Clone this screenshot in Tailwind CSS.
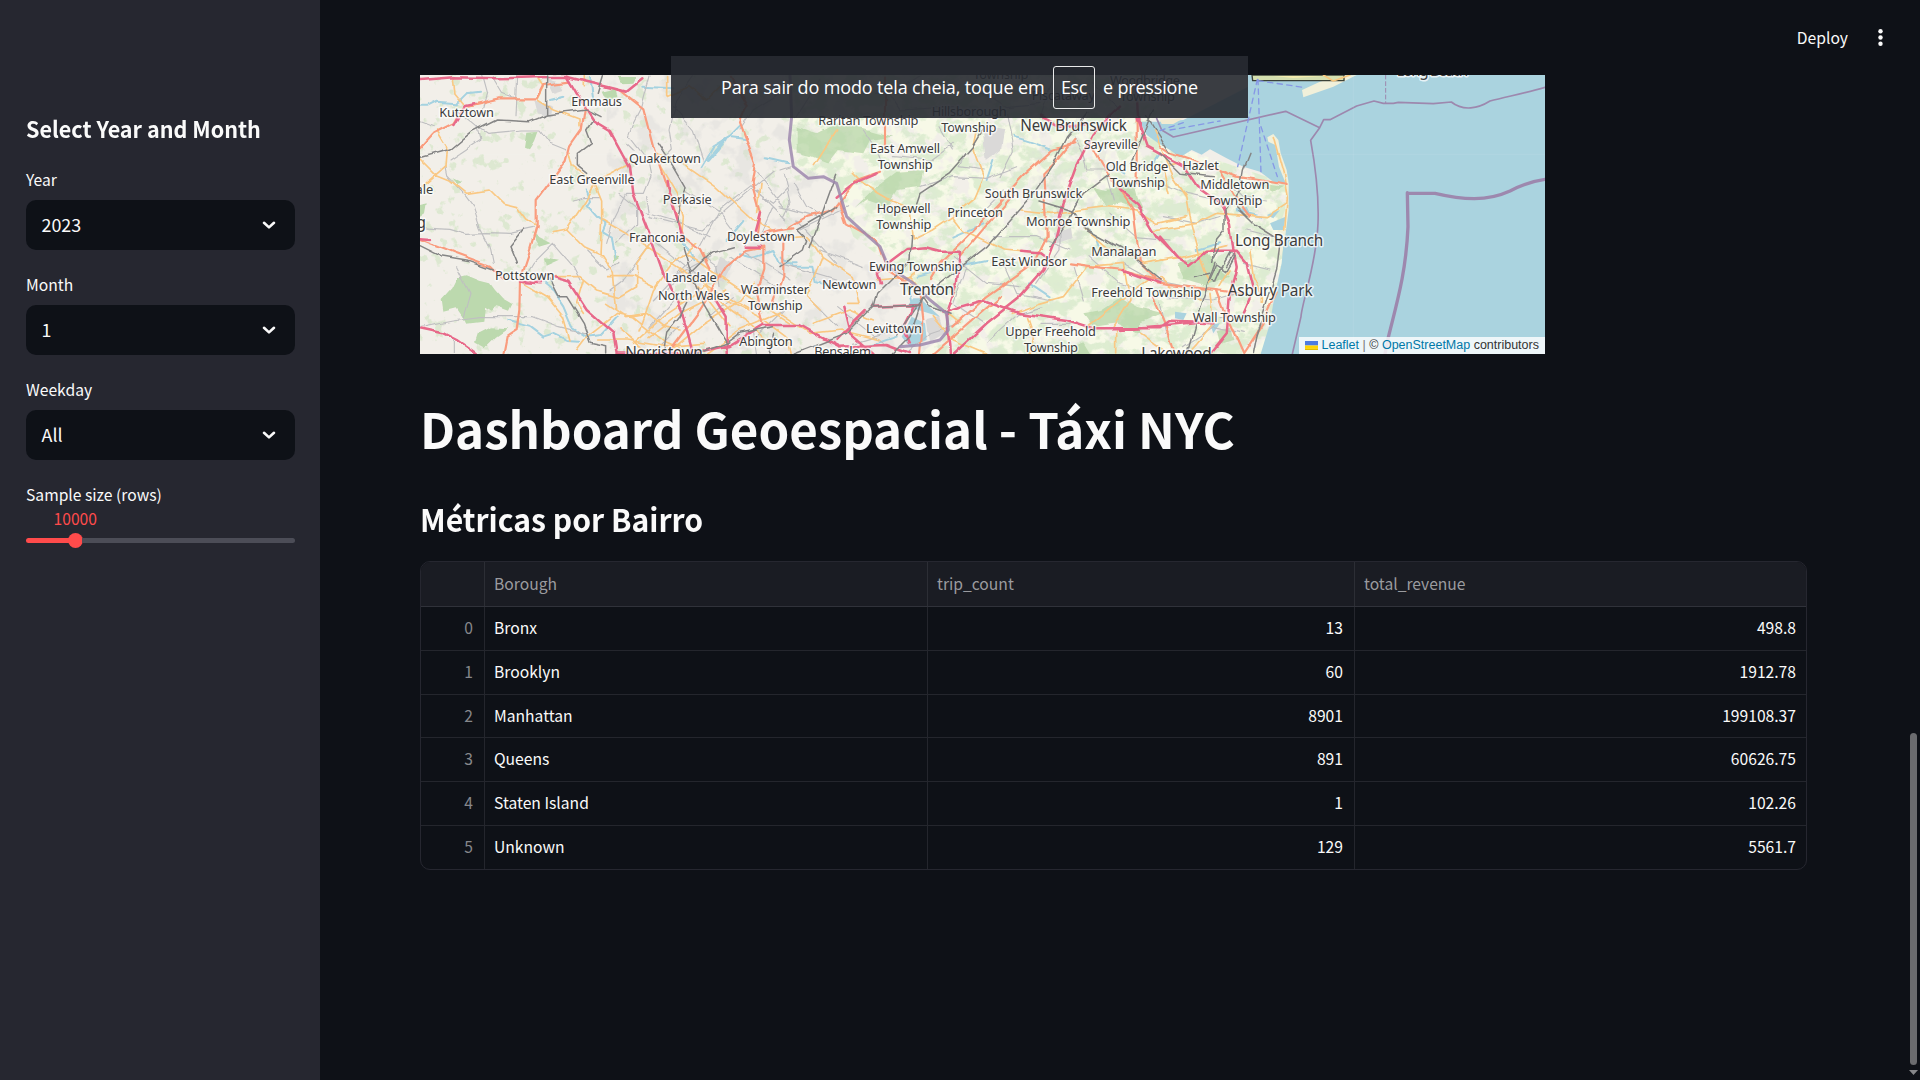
<!DOCTYPE html>
<html lang="pt">
<head>
<meta charset="utf-8">
<title>Dashboard Geoespacial - Táxi NYC</title>
<script src="https://cdn.jsdelivr.net/npm/@tailwindcss/browser@4"></script>
</head>
<body class="relative flex h-screen w-screen overflow-hidden bg-[#0e1117] font-['Noto_Sans_CJK_SC',sans-serif] text-[#fafafa]">

<aside class="flex w-[320px] shrink-0 flex-col bg-[#262730] px-[26px] pt-[110px]">
  <h2 class="h-[36px] text-[22.4px] leading-[36px] font-bold whitespace-nowrap"><span class="inline-block origin-left scale-x-[0.963]">Select Year and Month</span></h2>
  <div class="mt-[19px] flex flex-col gap-[15px]">
    <div>
      <div class="h-[35px] pt-[2px] text-[15.67px] leading-[26px]">Year</div>
      <div class="flex h-[50px] w-[269px] items-center justify-between rounded-[10px] bg-[#0e1117] pr-[19px] pl-[15.500px] text-[17.9px]"><span class="pb-[2px]">2023</span>
        <svg class="h-[14px] w-[14px]" viewBox="0 0 14 14" fill="none" stroke="#fafafa" stroke-width="2.6" stroke-linecap="round" stroke-linejoin="round"><path d="M2 4.8 7 9.4 12 4.8"/></svg></div>
    </div>
    <div class="mt-[5px]">
      <div class="h-[35px] pt-[2px] text-[15.67px] leading-[26px]">Month</div>
      <div class="flex h-[50px] w-[269px] items-center justify-between rounded-[10px] bg-[#0e1117] pr-[19px] pl-[15.500px] text-[17.9px]"><span class="pb-[2px]">1</span>
        <svg class="h-[14px] w-[14px]" viewBox="0 0 14 14" fill="none" stroke="#fafafa" stroke-width="2.6" stroke-linecap="round" stroke-linejoin="round"><path d="M2 4.8 7 9.4 12 4.8"/></svg></div>
    </div>
    <div class="mt-[5px]">
      <div class="h-[35px] pt-[2px] text-[15.67px] leading-[26px]">Weekday</div>
      <div class="flex h-[50px] w-[269px] items-center justify-between rounded-[10px] bg-[#0e1117] pr-[19px] pl-[15.500px] text-[17.9px]"><span class="pb-[2px]">All</span>
        <svg class="h-[14px] w-[14px]" viewBox="0 0 14 14" fill="none" stroke="#fafafa" stroke-width="2.6" stroke-linecap="round" stroke-linejoin="round"><path d="M2 4.8 7 9.4 12 4.8"/></svg></div>
    </div>
    <div class="mt-[5px]">
      <div class="h-[26px] pt-[2px] text-[15.67px] leading-[26px]">Sample size (rows)</div>
      <div class="h-[24px] pt-px pl-[27.5px] text-[15.67px] leading-[24px] text-[#ff4b4b]">10000</div>
      <div class="mt-[3px] flex h-[15px] w-[269px] items-center">
        <div class="h-[5px] w-[43px] rounded-l-full bg-[#ff4b4b]"></div>
        <div class="-mx-px h-[15px] w-[15px] rounded-full bg-[#ff4b4b]"></div>
        <div class="h-[5px] flex-1 rounded-r-full bg-[#4c4d57]"></div>
      </div>
    </div>
  </div>
</aside>

<main class="flex flex-1 flex-col">
  <header class="flex h-[75px] shrink-0 items-start justify-end pt-[24px] pr-[37px]">
    <span class="text-[15.67px] leading-[28px]">Deploy</span>
    <svg class="ml-[30px] mt-[3px] h-[22px] w-[5px]" viewBox="0 0 5 22" fill="#fafafa"><circle cx="2.5" cy="4.2" r="2.2"/><circle cx="2.5" cy="10.5" r="2.2"/><circle cx="2.5" cy="16.8" r="2.2"/></svg>
  </header>

  <section class="flex flex-col pr-[113px] pl-[100px]">
    <div class="relative h-[279px] w-[1125px] overflow-hidden bg-[#f2efe9]">
      <svg class="block h-[279px] w-[1125px]" viewBox="0 75 3375 837" fill="none" stroke-linecap="round" stroke-linejoin="round">
        <defs>
          <filter id="wobble" filterUnits="userSpaceOnUse" x="0" y="60" width="3375" height="870"><feTurbulence type="fractalNoise" baseFrequency=".014" numOctaves="2" seed="4"/><feDisplacementMap in="SourceGraphic" scale="20" xChannelSelector="R" yChannelSelector="G"/></filter>
          <filter id="woods" filterUnits="userSpaceOnUse" x="0" y="60" width="3375" height="870"><feTurbulence type="fractalNoise" baseFrequency=".018 .024" numOctaves="5" seed="9"/><feColorMatrix values="0 0 0 0 .7  0 0 0 0 .83  0 0 0 0 .62  8 0 0 0 -3.7"/><feComposite operator="in" in2="SourceGraphic"/></filter>
          <filter id="farms" filterUnits="userSpaceOnUse" x="0" y="60" width="3375" height="870"><feTurbulence type="fractalNoise" baseFrequency=".02" numOctaves="4" seed="22"/><feColorMatrix values="0 0 0 0 .93  0 0 0 0 .945  0 0 0 0 .8  9 0 0 0 -3.6"/><feComposite operator="in" in2="SourceGraphic"/></filter>
          <filter id="towns" filterUnits="userSpaceOnUse" x="0" y="60" width="3375" height="870"><feTurbulence type="fractalNoise" baseFrequency=".014" numOctaves="4" seed="31"/><feColorMatrix values="0 0 0 0 .7  0 0 0 0 .7  0 0 0 0 .69  9 0 0 0 -4.8"/><feComposite operator="in" in2="SourceGraphic"/></filter>
          <filter id="parks" filterUnits="userSpaceOnUse" x="0" y="60" width="3375" height="870"><feTurbulence type="fractalNoise" baseFrequency=".025" numOctaves="4" seed="51"/><feColorMatrix values="0 0 0 0 .63  0 0 0 0 .78  0 0 0 0 .54  11 0 0 0 -6.9"/><feComposite operator="in" in2="SourceGraphic"/></filter>
        </defs>
        <!-- land cover -->
        <rect y="75" width="1200" height="837" fill="#000" filter="url(#parks)" opacity=".6"/>
        <path d="M1110 75 1115 330 1150 385 1240 385 1270 480 1300 560 1380 620 1440 690 1500 740 1580 800 1570 860 1500 912H2540L2600 560 2600 400 2300 300 2210 200 2210 75Z" fill="#000" filter="url(#farms)"/>
        <path d="M1110 75 1115 330 1150 385 1240 385 1270 480 1300 560 1380 620 1440 690 1500 740 1580 800 1570 860 1500 912H2540L2600 560 2600 400 2300 300 2210 200 2210 75Z" fill="#000" filter="url(#woods)" opacity=".85"/>
        <path d="M560 75H1110L1115 330 1240 400 1320 600 1500 740 1560 860 1500 912H560ZM1700 220H2080L2000 560 1880 600Z" fill="#000" filter="url(#towns)" opacity=".4"/>
        <g fill="#bcd9ae" filter="url(#wobble)">
          <path d="M115 682 140 676 180 692 210 700 225 720 250 748 280 765 270 785 230 770 215 782 195 770 190 812 140 818 110 775 70 785 65 750 100 712Z"/>
          <path d="M175 850 210 832 262 835 225 860 190 895 165 880Z"/><path d="M325 245 355 243 345 270 330 295 318 290Z"/><path d="M545 125 590 115 595 140 560 158Z"/><path d="M590 78 650 78 640 98 605 100Z"/><path d="M0 465 20 460 15 490 0 500ZM98 385 130 400 115 405ZM335 550 395 580 360 590ZM375 625 420 632 380 650ZM578 620 600 625 580 640Z"/>
        </g>
        <g fill="#b5d5a6" opacity=".7" filter="url(#wobble)">
          <path d="M1130 230 1190 250 1250 220 1330 235 1420 260 1350 270 1330 310 1250 300 1220 340 1170 320 1130 310ZM1370 410 1430 365 1510 360 1500 410 1430 420 1400 470 1340 450 1300 480ZM2020 410 2060 420 2140 400 2150 440 2170 480 2100 460 2060 470ZM1990 790 2040 780 2100 740 2150 770 2230 790 2160 820 2160 850 2090 820 2020 830ZM2270 640 2360 610 2390 650 2430 680 2360 710 2290 690ZM2520 400 2590 410 2560 425ZM2390 840 2430 830 2440 870 2400 880ZM1950 895 1990 880 2010 912H1950Z"/>
        </g>
        <path d="M1690 230 1750 240 1740 300 1700 330ZM1520 810 1560 800 1575 850 1530 875ZM1895 550 1950 530 1955 565 1910 580ZM340 150 400 170 390 200 350 190ZM380 85 420 95 430 120 400 130ZM900 620 940 640 910 700 880 680Z" fill="#dad9d8" filter="url(#wobble)"/>
        <!-- water -->
        <path d="M2484 75H3375V912H2522L2550 820 2563 740 2585 640 2592 560 2600 480 2598 402 2560 395 2520 365 2470 350 2420 325 2370 298 2345 314 2315 300 2280 322 2250 300 2215 280 2180 255 2160 215 2220 215 2290 210 2484 110Z" fill="#aad3df"/>
        <path d="M2542 262 2560 252 2575 270 2582 310 2600 360 2606 400 2606 480 2597 550 2584 620 2560 580 2595 480 2597 400 2577 350 2566 285 2545 275ZM2646 120 2700 95 2760 78 2810 75 2740 110 2650 142Z" fill="#f1f0da"/>
        <path d="M2496 75H2772V92H2498Z" fill="#d5e0b0" stroke="#3c4238" stroke-width="4"/><path d="M2560 78h150l-90 6z" fill="#f5edb0"/><path d="m2710 75 30 18 50-18" stroke="#f8c77e" stroke-width="5"/>
        <path d="M2220 210 2290 205 2260 222 2225 222Z" fill="#f2ead0"/>
        <path d="M1460 770 1495 780 1560 800 1500 745 1480 745ZM1475 800 1515 820 1520 870 1470 890 1445 860ZM2550 520 2597 500 2590 540 2560 540ZM2540 495 2580 480 2560 505ZM2265 785 2300 790 2290 810 2265 805ZM2370 822 2400 820 2380 850ZM2455 480 2480 470 2490 490Z" fill="#aad3df"/>
        <g stroke="#a5d2e0" stroke-width="6" filter="url(#wobble)">
          <path d="M0 170H20L50 155 110 160 140 130 180 125M500 420 510 450 500 465 530 500 560 520 550 545 575 560 585 625M265 812 330 830 370 860 400 850 440 870 480 872M370 700 400 725 430 770 455 830 500 860 540 855 590 800M845 350 880 290 930 260 960 230M935 265 975 270M1040 325 1105 340M780 570 810 600 820 630M920 570 970 510M960 610 1000 620 1060 600 1080 640 1130 640M390 150 430 140M510 80 520 150M670 110 760 115M1085 620 1120 650 1180 650 1190 700 1240 710M1700 390 1720 330M1780 260 1830 275 1900 300M1600 560 1690 520M1460 700 1480 780M1490 680 1600 650 1700 630M1830 700 1890 740M1340 890 1430 860M1990 530 2030 560 2040 590M2220 310 2200 340M2080 350 2110 370M2450 480 2520 500M2400 580 2330 600" />
          <path d="M865 330 915 270" stroke-width="11"/>
        </g>
        <!-- minor roads -->
        <g stroke="#bfbfc1" stroke-width="3.4" filter="url(#wobble)">
          <path d="M0 215 40 230M290 75 285 200M185 75 200 130 180 200M110 180 170 230 180 270 90 330M170 230 200 250 310 240 360 240 390 280 440 300M220 80 250 130 290 145M130 430 160 470 180 530 210 590 220 640M0 530 90 535 140 550 200 548 270 550 340 535M75 350 80 375 130 430M400 580 340 640 310 690M400 580 460 650 480 690M0 830 100 810 180 800 340 800 420 830 500 850M100 912 100 870M110 650 150 730 130 800M460 450 490 440 540 440M690 75 665 170 640 220 625 260 680 330 690 380 670 430 620 430 580 510 560 580M820 80 770 150 750 240 760 300 720 340M760 170 820 240 850 330M1110 110 1000 180 960 240M790 420 900 490 960 570M680 440 690 500 850 540 930 470 1060 360M600 430 660 480 760 510 870 560M640 300 620 280M840 590 900 480 990 410 1060 460 1100 420M1010 420 1100 510M1020 560 1060 470M1090 370 1110 460 1090 500M1005 360 1090 470M500 600 560 660 600 640M700 570 610 690 570 720M700 570 800 650 870 700M650 470 650 520 590 580M850 620 890 650 900 710M930 620 1080 720M970 600 1110 690M740 720 780 670 870 620M700 750 820 620M690 830 790 720M780 830 700 912M870 800 940 740M1000 840 1010 912M1090 780 1000 870"/>
          <path d="M1120 400 1160 470 1210 500M1110 350 1080 360M1080 470 1190 500M1140 540 1280 470M1130 510 1250 640M1200 600 1330 650M1080 640 1250 690M1170 750 1250 830M1300 880 1470 830M1330 240 1370 300 1390 350M1370 130 1470 100 1500 80M1420 320 1530 330 1600 280M1500 410 1600 380 1700 385 1790 350M1560 230 1600 300M1700 470 1750 420M1640 310 1620 350 1690 360M1760 190 1780 300 1740 380M1960 260 1990 320 2000 360 2060 360M1720 560 1850 560 1950 600M1920 480 1920 600 1850 700M1750 640 1790 730 1900 750M1600 620 1700 700 1800 710M1640 650 1600 760 1690 820M1700 880 1800 790 1870 770M1860 820 1950 820M1960 650 1990 750M2010 620 2100 700 2160 720M2070 490 2150 560 2250 570M2230 400 2300 430 2390 450M2230 500 2330 520 2400 500M2110 640 2200 690 2300 710M2250 740 2380 750 2450 730M2290 890 2380 830 2470 850M2470 640 2550 660M2430 400 2470 440 2540 450M2480 540 2560 560M2400 800 2520 800M2220 750 2240 850M2080 450 2060 380M1460 912 1530 850 1620 820M1250 770 1390 880"/>
          <path d="M1680 120 1760 170 1860 160M1380 90 1440 180 1600 170M1200 90 1130 200M1900 80 1860 200M2020 100 2100 180"/>
        </g>
        <!-- primary roads -->
        <g stroke="#fac883" stroke-width="5" filter="url(#wobble)">
          <path d="M100 85 105 130 130 160M0 330 40 370 90 390 140 430 210 420 250 460 290 470 320 510 350 530M0 415 75 350 80 290 50 240M350 80 370 110 350 150 400 180 480 210 480 230M400 548 440 540 500 450 525 400 545 450 545 510 540 615M440 540 490 590 545 615M450 310 460 350 520 395 630 340M550 510 620 550 700 600 850 700 990 780M545 615 580 670 590 780M400 680 480 680 530 720 600 740 650 710 650 640 700 570M490 690 470 760 490 790M560 680 640 680 700 710M560 760 620 800 680 790 730 830 780 840M310 700 380 740 430 800 450 870M590 790 500 860 470 900M590 790 640 800 740 880 820 912M740 80 740 140 810 110 860 150 900 110M490 75 490 110M700 310 790 340 890 410 1000 510 1080 560M700 310 770 430 790 500 785 560M640 880 730 800 820 740 890 670M690 860 780 790 920 720M740 912 850 820 960 750 1000 700M800 610 870 660 960 720 1110 820M830 580 760 640 700 720 660 840M850 700 930 780 1000 830 1060 890M780 660 860 740 930 830M1020 400 1010 490M1040 570 1150 560M900 740 1020 800 1100 860 1110 912M600 840 690 912M860 912 960 840 1080 790M530 870 620 870 740 890 850 880"/>
          <path d="M1300 370 1330 400 1400 440 1470 470 1480 570M1160 560 1190 590 1210 620 1190 670 1160 740 1200 780M1210 620 1300 680 1320 760 1280 760M1370 690 1470 680 1510 730M1480 570 1540 540 1600 500 1660 450 1690 380 1660 300 1670 250M1600 500 1630 540 1750 600 1850 610M1800 480 1900 490 1980 480 2060 470 2150 480 2210 520 2300 500M1990 530 2060 590 2170 640 2280 620M2000 650 2110 640 2130 750 2080 830M1780 790 1860 760 1930 740 2000 650M1820 800 1840 860 1830 912M2000 830 2100 750 2200 680M2200 540 2330 520 2390 490 2540 500 2600 460M2250 430 2230 350 2270 340M2200 240 2260 380 2300 440 2310 500 2340 620 2370 700M2220 630 2300 620 2420 590M2490 600 2500 680 2530 740 2530 760M2370 730 2380 820 2330 880 2300 912M2220 680 2260 720 2340 750M2430 660 2400 710M2560 260 2590 370 2602 450 2594 540M1540 800 1600 870 1700 912M1180 820 1290 780 1360 810M1080 790 1170 850 1260 840 1380 870M1570 780 1620 820M1440 700 1490 660M2090 840 2090 912M2160 850 2230 900M1250 240 1180 350"/>
        </g>
        <!-- trunk roads -->
        <g stroke="#fa9c7e" stroke-width="6.5" filter="url(#wobble)">
          <path d="M0 295 40 250 100 220 130 170 240 145 350 145 370 105 450 95M495 175 485 240 450 290 440 330 350 450 350 530 330 600 300 690 298 780 290 840 260 860 250 912M600 120 670 175 700 290 730 380 760 470 790 560 840 600 870 660M930 80 980 170 960 220 1005 340 995 400 1020 490 1010 560 1050 545 1120 535M0 570 100 610 210 650 250 690M750 900 840 780 920 650 980 600 1030 590 1030 660 1010 720 1030 820M1090 580 1090 680 1060 760M1110 530 1160 500 1240 480 1310 390 1380 365M1260 460 1280 520 1370 570 1400 660 1500 720M1600 830 1700 740 1840 640 1880 560 1870 370 1920 320 1960 270M1530 690 1560 640 1680 520 1810 380 1900 300 1960 280M1620 620 1780 430M1950 640 2020 650 2110 660 2220 690M2010 280 2050 350 2100 420 2140 480 2150 560 2160 640 2200 680M2150 210 2150 400M2220 290 2250 310 2400 360 2450 380 2520 390 2600 405M2400 360 2440 430 2490 500M2210 700 2290 710 2390 720 2460 730M2200 740 2240 830 2265 912M2390 720 2420 800 2470 912M1395 80 1395 300M2470 912 2530 820 2570 730M1500 720 1510 810 1500 912M1740 740 1540 912"/>
        </g>
        <!-- motorways -->
        <g stroke="#e8698a" stroke-width="7.5" filter="url(#wobble)">
          <path d="M0 90 100 82 230 85 350 82 440 80 540 105 620 125 670 85M440 80 470 130 520 210 570 240 630 350 640 430 680 530 730 670 790 800 820 912M100 225 135 165 160 160M740 390 745 430 770 510 790 570M0 568 30 570M300 695 360 700M400 682 445 695 500 780 580 850 590 912M0 835 70 850 110 870 170 912M890 750 920 800 920 912M590 910 800 912 930 885 1030 825 1140 825 1200 860 1260 890 1400 885 1470 912M1020 490 1005 545M980 590 1020 590"/>
          <path d="M1250 440 1300 400 1370 370M1380 700 1370 670 1420 630 1460 600 1520 595 1560 605 1620 605 1610 700 1580 790 1590 912M1360 770 1500 765M1570 785 1690 750 1800 790 1940 810 2020 835 2220 835 2250 815 2380 820M1600 912 1700 820 1800 740 1870 660 1900 580 1930 460 1970 350 2020 250 2100 170M1800 605 1860 610 1900 640M2150 205 2180 290 2290 350 2330 410 2400 460 2430 520 2440 600 2450 650 2430 730 2420 850 2370 912M2220 560 2270 620 2310 645 2360 605 2450 605 2480 640 2500 720 2470 790M2100 420 2150 460 2210 560 2270 620M2110 660 2220 700M1340 780 1250 870M1480 770 1450 830 1470 880M2220 830 2100 840M1270 770 1290 850 1360 912M2220 830 2320 820"/>
          <path d="M1860 200 1920 230 2000 220M2150 90 2160 240" />
        </g>
        <!-- railways -->
        <g stroke="#858585" stroke-width="4.5" filter="url(#wobble)">
          <path d="M0 325 90 300 150 250 230 210 330 215 380 195 500 180 540 200M380 75V195M550 80 535 130M520 210 500 240 515 280 475 310 475 350 500 370M715 280 760 350 795 410 770 520M790 590 820 690 850 760 920 880M0 590 60 620 150 635 220 660M385 690 410 740 440 740 490 820 510 880 560 890 560 912M310 540 270 590 290 640M810 670 870 610 940 590M800 760 780 800 740 850 730 912M920 880 820 912M920 880 960 850 1060 830"/>
          <path d="M2000 190 1940 260 1900 340 1840 430 1700 590 1560 700 1510 740 1430 855M1510 740 1500 765 1360 770 1280 850 1120 912M1510 740 1530 770 1590 790M1500 765 1470 860 1420 912M1690 240 1660 290 1590 370 1500 430 1490 460M1475 560 1470 630 1370 730 1360 770M2070 370 1990 430 1960 480 1890 590M1860 450 1960 480 2000 540 2110 600 2220 690M2180 200 2250 310M2220 310 2280 370 2380 380M2200 180 2160 280 2130 340M2490 310 2470 360 2460 420 2415 480 2415 540 2390 570 2375 640M2450 470 2500 520 2580 570 2570 660 2540 760 2510 860 2500 912M2385 640 2340 770 2300 912M1250 370 1170 590M1080 650 1150 600 1160 570 1130 540 1250 470M1050 912 1060 850"/>
          <path d="m2370 690 20-45 15 10-20 45zM2405 655l25-45 15 10-25 45zM2380 630l15-30M2420 650l20-35M2320 680l50-10"/>
        </g>
        <!-- boundaries -->
        <g stroke="#9d88ae">
          <path d="M1110 75 1115 200 1108 270 1120 350 1165 385 1210 380 1250 400 1265 450 1280 500 1335 550 1380 590 1405 650 1480 700 1530 750 1580 790 1585 840 1560 870 1500 885 1440 890" stroke-width="9" opacity=".85"/>
          <path d="M2210 205 2225 240 2260 261 2597 184 2699 233 2672 271C2690 370 2697 440 2694 520 2690 640 2645 760 2643 800L2617 912M2699 233 2711 209H2730L2810 168 2862 153 2890 160H2920L2935 157 3040 161 3094 156C3130 185 3175 175 3210 153 3260 140 3320 128 3375 112" stroke-width="5"/>
          <path d="M2962 428 2964 530C2958 670 2930 760 2905 862L2895 912M2962 430H3045C3130 450 3200 455 3270 423 3310 402 3340 393 3375 388" stroke-width="10"/>
          <path d="M2897 75V160" stroke-width="3" stroke-dasharray="12 8"/>
        </g>
        <g stroke="#8798e5" stroke-width="4" stroke-dasharray="16 13"><path d="M2512 88 2453 350M2514 88 2523 370M2523 230 2572 380M2250 240 2400 213M2290 218 2210 245M2514 92 2650 112"/></g>
        <path d="M2800 75V912M0 313H1110M2580 313H3375" stroke="#fff" stroke-width="2" opacity=".13"/>
        <!-- place names -->
        <g font-family="Noto Sans, sans-serif" font-size="38.500" fill="#3c3c3c" stroke="#fff" stroke-opacity=".72" stroke-width="9" paint-order="stroke" lengthAdjust="spacingAndGlyphs">
          <text x="58" y="200" textLength="164">Kutztown</text><text x="454" y="168" textLength="152">Emmaus</text><text x="627" y="340" textLength="216">Quakertown</text><text x="388" y="401" textLength="256">East Greenville</text><text x="728" y="461" textLength="147">Perkasie</text><text x="627" y="576" textLength="170">Franconia</text><text x="921" y="573" textLength="204">Doylestown</text><text x="225" y="689" textLength="178">Pottstown</text><text x="736" y="696" textLength="154">Lansdale</text><text x="714" y="750" textLength="215">North Wales</text><text x="962" y="733" textLength="205">Warminster</text><text x="984" y="781" textLength="164">Township</text><text x="958" y="889" textLength="160">Abington</text><text x="40" y="433" text-anchor="end">Laureldale</text>
          <g transform="translate(1080)"><text x="580" y="88" textLength="165">Township</text><text x="755" y="149" textLength="190">Piscataway</text><text x="990" y="105" textLength="210">Woodbridge</text><text x="1020" y="152" textLength="165">Township</text><text x="115" y="225" textLength="300">Raritan Township</text><text x="455" y="199" textLength="225">Hillsborough</text><text x="484" y="247" textLength="165">Township</text><text x="270" y="310" textLength="210">East Amwell</text><text x="293" y="358" textLength="165">Township</text><text x="911" y="298" textLength="163">Sayreville</text><text x="977" y="363" textLength="188">Old Bridge</text><text x="990" y="411" textLength="165">Township</text><text x="614" y="444" textLength="293">South Brunswick</text><text x="290" y="489" textLength="162">Hopewell</text><text x="289" y="537" textLength="165">Township</text><text x="502" y="500" textLength="167">Princeton</text><text x="738" y="527" textLength="313">Monroe Township</text><text x="934" y="617" textLength="195">Manalapan</text><text x="634" y="648" textLength="227">East Windsor</text><text x="267" y="662" textLength="280">Ewing Township</text><text x="126" y="716" textLength="163">Newtown</text><text x="934" y="740" textLength="330">Freehold Township</text><text x="258" y="850" textLength="168">Levittown</text><text x="676" y="858" textLength="272">Upper Freehold</text><text x="732" y="905" textLength="162">Township</text><text x="103" y="917" textLength="170">Bensalem</text></g>
          <g transform="translate(2220)"><text x="67" y="359" textLength="110">Hazlet</text><text x="121" y="416" textLength="207">Middletown</text><text x="142" y="464" textLength="165">Township</text><text x="98" y="816" textLength="250">Wall Township</text></g>
          <g font-size="46"><text x="18" y="533" text-anchor="end">Reading</text><text x="616" y="924" textLength="232">Norristown</text><text x="1801" y="243" textLength="320">New Brunswick</text><text x="1440" y="736" textLength="162">Trenton</text><text x="2164" y="926" textLength="211">Lakewood</text><text x="2445" y="588" textLength="265">Long Branch</text><text x="2423" y="738" textLength="255">Asbury Park</text><text x="2930" y="78" textLength="215">Long Beach</text></g>
        </g>
      </svg>
      <div class="absolute right-0 bottom-0 flex h-[17px] w-[246px] items-center bg-white/80 pl-[6px] font-['Liberation_Sans',sans-serif] text-[12.500px] leading-[17px] whitespace-pre text-[#333]">
        <svg class="mr-[3.500px] h-[9px] w-[13px] shrink-0" viewBox="0 0 12 8" preserveAspectRatio="none"><path fill="#4C7BE1" d="M0 0h12v4H0z"/><path fill="#FFD500" d="M0 4h12v3H0z"/><path fill="#E0BC00" d="M0 7h12v1H0z"/></svg><span><span class="text-[#0078a8]">Leaflet</span> <span class="text-[#777]">|</span> © <span class="text-[#0078a8]">OpenStreetMap</span> contributors</span>
      </div>
    </div>

    <h1 class="mt-[35px] h-[78px] text-[49.2px] leading-[78px] font-bold whitespace-nowrap">Dashboard Geoespacial - Táxi NYC</h1>
    <h2 class="mt-[28px] h-[48px] text-[31.3px] leading-[48px] font-bold whitespace-nowrap"><span class="inline-block origin-left scale-x-[0.962]">Métricas por Bairro</span></h2>

    <div class="mt-[18px] h-[309px] w-[1387px] overflow-hidden rounded-[10px] border border-[#262730] text-[15.67px]">
      <div class="grid h-[45px] grid-cols-[64px_443px_427px_1fr] border-b border-[#30323a] bg-[#1a1c23] leading-[43px] text-[#9a9b9f] [&>*]:border-r [&>*]:border-[#2c2e35] [&>*:last-child]:border-r-0"><div></div><div class="pl-[9px]">Borough</div><div class="pl-[9px]">trip_count</div><div class="pl-[9px]">total_revenue</div></div>
      <div id="rows"></div>
    </div>
  </section>
</main>

<div class="absolute top-[56px] left-[671px] flex h-[62px] w-[577px] items-center bg-[#282b32]/91 pl-[50px] font-['Open_Sans',sans-serif] text-[18px] whitespace-nowrap text-white">
  <span class="w-[332px] tracking-[-0.14px]">Para sair do modo tela cheia, toque em</span>
  <span class="flex h-[43px] w-[42px] items-center justify-center rounded-[3px] border border-white/90 tracking-[-0.4px]">Esc</span>
  <span class="ml-[8px] tracking-[-0.18px]">e pressione</span>
</div>

<div class="absolute top-[733px] right-[3px] h-[332px] w-[7px] rounded-full bg-[#6b6c6f]"></div>
<svg class="absolute top-[1070px] right-[2px] h-[5px] w-[9px]" viewBox="0 0 9 5"><path d="M0 0h9L4.500 5z" fill="#86878a"/></svg>

<script>
const data = [["Bronx","13","498.8"],["Brooklyn","60","1912.78"],["Manhattan","8901","199108.37"],["Queens","891","60626.75"],["Staten Island","1","102.26"],["Unknown","129","5561.7"]];
document.getElementById("rows").innerHTML = data.map((r, i) =>
  `<div class="grid h-[43.75px] grid-cols-[64px_443px_427px_1fr] border-b border-[#24262d] leading-[41px] last:border-b-0 [&>*]:border-r [&>*]:border-[#24262d] [&>*:last-child]:border-r-0"><div class="pr-[11px] text-right text-[#86878b]">${i}</div><div class="pl-[9px]">${r[0]}</div><div class="pr-[11px] text-right">${r[1]}</div><div class="pr-[10px] text-right">${r[2]}</div></div>`).join("");
</script>
</body>
</html>
